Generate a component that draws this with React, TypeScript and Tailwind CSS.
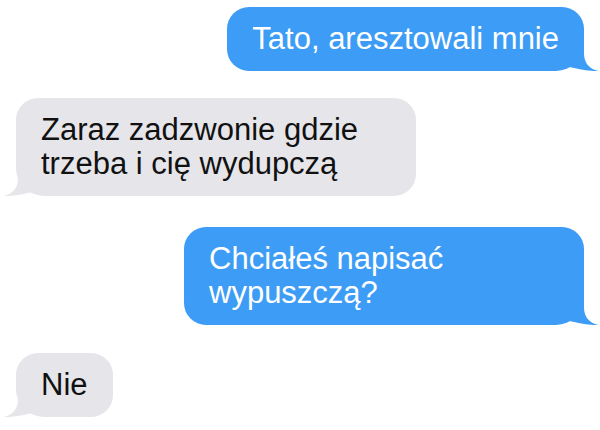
import React from 'react';

interface Message {
  id: number;
  text: string;
  mine: boolean;
  gap: string;
}

const messages: Message[] = [
  { id: 1, text: 'Tato, aresztowali mnie', mine: true, gap: 'mt-0' },
  { id: 2, text: 'Zaraz zadzwonie gdzie trzeba i cię wydupczą', mine: false, gap: 'mt-[27px]' },
  { id: 3, text: 'Chciałeś napisać wypuszczą?', mine: true, gap: 'mt-[31px]' },
  { id: 4, text: 'Nie', mine: false, gap: 'mt-[28px]' },
];

// bubble tail, drawn for the right side; mirrored for the left one
const Tail: React.FC<{ mine: boolean }> = ({ mine }) => (
  <svg
    className={
      mine
        ? 'absolute -right-[15px] bottom-0 w-[30px] h-[30px] text-[#3d9cf5]'
        : 'absolute -left-[13px] bottom-0 w-[30px] h-[30px] text-[#e5e5ea] -scale-x-100'
    }
    viewBox="0 0 30 30"
    fill="currentColor"
  >
    <path d="M15 0 L15 12 C15 21 19 27.5 29.5 30 C22 30.4 14 29 0 26 Z" />
  </svg>
);

const App: React.FC = () => {
  return (
    <div
      className="w-[600px] h-[430px] bg-white overflow-hidden px-4 pt-[7px] flex flex-col"
      style={{ fontFamily: '"Liberation Sans", Arial, sans-serif' }}
    >
      {messages.map((m) => (
        <div
          key={m.id}
          className={`relative max-w-[400px] px-[25px] py-[15px] text-[31px] leading-[34px] ${m.gap} ${
            m.mine
              ? 'self-end bg-[#3d9cf5] text-white rounded-[22px] rounded-br-[28px]'
              : 'self-start bg-[#e5e5ea] text-[#111111] rounded-[22px] rounded-bl-[28px]'
          }`}
        >
          {m.text}
          <Tail mine={m.mine} />
        </div>
      ))}
    </div>
  );
};

export default App;
